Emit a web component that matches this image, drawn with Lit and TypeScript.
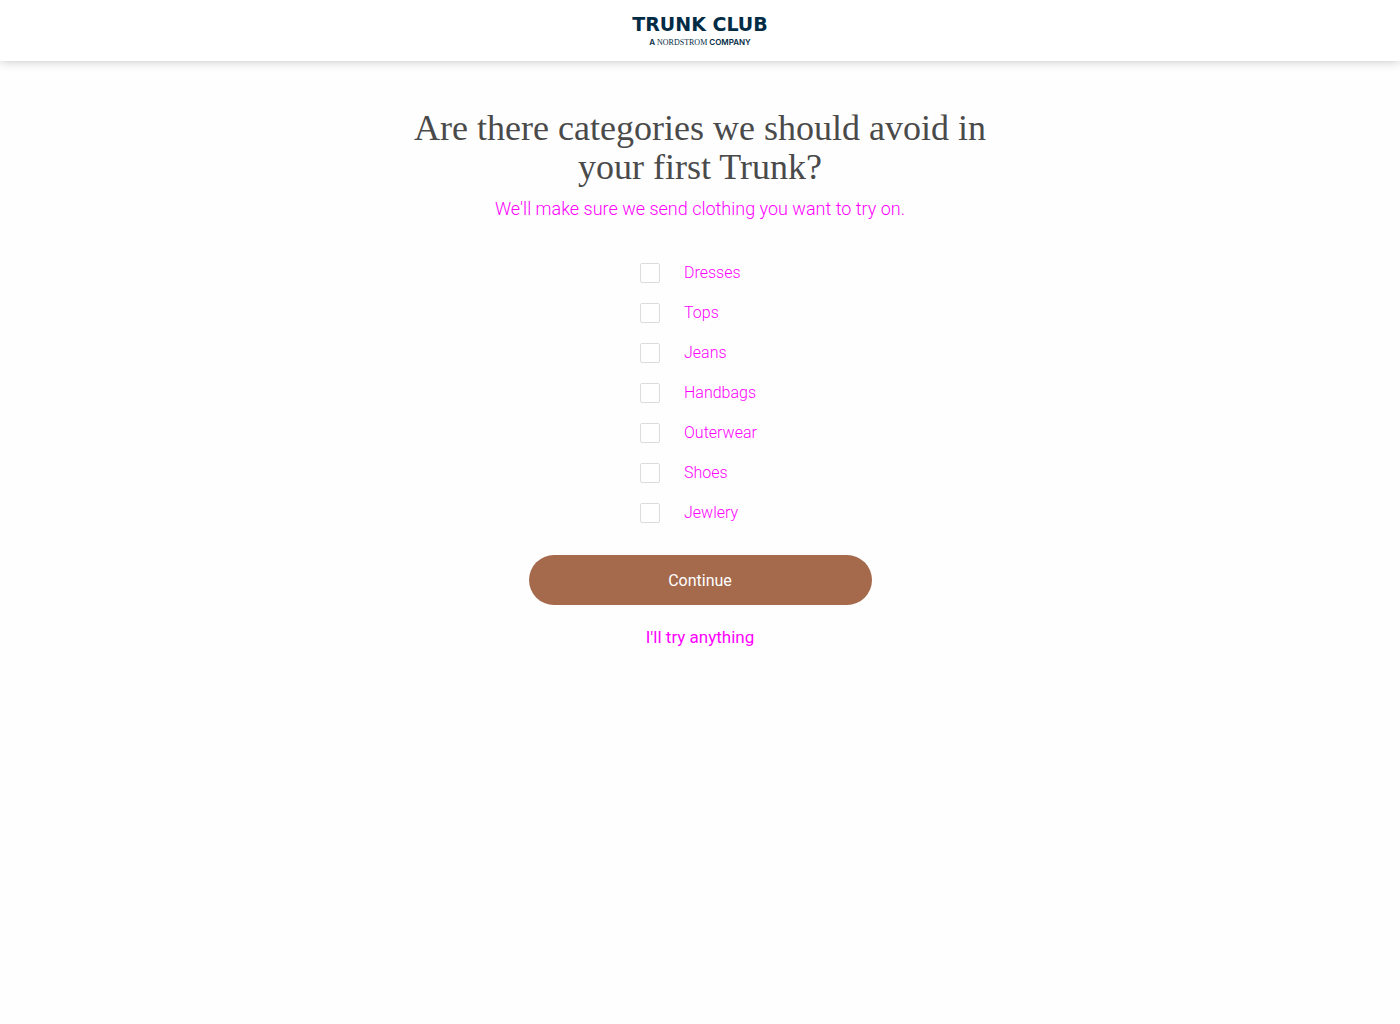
import { LitElement, html, css } from "lit";
import { customElement, state } from "lit/decorators.js";

@customElement("brand-header")
class BrandHeader extends LitElement {
  static styles = css`
    :host {
      display: block;
    }
    .bar {
      display: flex;
      justify-content: center;
      padding: 12px 16px;
      background: #fff;
      box-shadow: 0 0 10px rgba(0, 0, 0, 0.24);
    }
    .logo {
      display: flex;
      flex-direction: column;
      align-items: center;
      color: #022b45;
      text-decoration: none;
      white-space: nowrap;
    }
    .name {
      font-family: "DejaVu Sans", sans-serif;
      font-size: 19px;
      font-weight: 700;
      line-height: 24px;
    }
    .owner {
      font-family: Inter, sans-serif;
      font-size: 8px;
      font-weight: 600;
      line-height: 13px;
    }
    .partner {
      font-family: "Liberation Serif", serif;
      font-weight: 400;
    }
  `;

  render() {
    return html`
      <header class="bar">
        <a class="logo" href="#">
          <span class="name">TRUNK CLUB</span>
          <span class="owner">A <span class="partner">NORDSTROM</span> COMPANY</span>
        </a>
      </header>
    `;
  }
}

@customElement("app-root")
class AppRoot extends LitElement {
  static styles = css`
    :host {
      display: block;
      min-height: 100vh;
      background: #fefefe;
      color: #f0f;
      font-family: Roboto, sans-serif;
    }
    .page {
      display: flex;
      flex-direction: column;
      align-items: center;
      padding: 48px 16px;
    }
    .title {
      max-width: 600px;
      margin: 0;
      color: #4a4a4a;
      font-family: "Liberation Serif", serif;
      font-size: 36px;
      font-weight: 400;
      line-height: 39px;
      text-align: center;
    }
    .subtitle {
      margin: 8px 0 0;
      font-size: 18px;
      font-weight: 300;
      line-height: 28px;
      text-align: center;
    }
    .form {
      display: flex;
      flex-direction: column;
      align-items: center;
      width: 100%;
      max-width: 343px;
      margin-top: 40px;
    }
    .options {
      display: flex;
      flex-direction: column;
      gap: 20px;
      min-width: 120px;
      margin: 0;
      padding: 0;
      border: 0;
    }
    .option {
      display: flex;
      align-items: center;
      gap: 24px;
      font-size: 16px;
      font-weight: 300;
      line-height: 20px;
      cursor: pointer;
    }
    .box {
      appearance: none;
      box-sizing: border-box;
      width: 20px;
      height: 20px;
      margin: 0;
      border: 1px solid #dcdcdc;
      border-radius: 2px;
      background: #fff;
      cursor: pointer;
    }
    .box:checked {
      border-color: #a5694c;
      background: #a5694c;
    }
    .continue {
      width: 100%;
      height: 50px;
      margin: 32px 0 0;
      padding: 0;
      border: 0;
      border-radius: 25px;
      background: #a5694c;
      color: #fff;
      font-family: inherit;
      font-size: 16px;
      font-weight: 400;
      cursor: pointer;
    }
    .skip {
      margin-top: 22px;
      color: inherit;
      font-size: 17px;
      font-weight: 400;
      line-height: 20px;
      text-decoration: none;
    }
  `;

  @state() private avoided = new Set<string>();

  private categories = ["Dresses", "Tops", "Jeans", "Handbags", "Outerwear", "Shoes", "Jewlery"];

  private toggle(name: string) {
    const next = new Set(this.avoided);
    if (!next.delete(name)) next.add(name);
    this.avoided = next;
  }

  render() {
    return html`
      <brand-header></brand-header>
      <main class="page">
        <h1 class="title" id="title">Are there categories we should avoid in your first Trunk?</h1>
        <p class="subtitle">We'll make sure we send clothing you want to try on.</p>
        <form class="form" @submit=${(e: Event) => e.preventDefault()}>
          <fieldset class="options" aria-labelledby="title">
            ${this.categories.map(
              (name) => html`
                <label class="option">
                  <input
                    class="box"
                    type="checkbox"
                    .checked=${this.avoided.has(name)}
                    @change=${() => this.toggle(name)}
                  />
                  <span>${name}</span>
                </label>
              `
            )}
          </fieldset>
          <button class="continue" type="submit">Continue</button>
          <a class="skip" href="#">I'll try anything</a>
        </form>
      </main>
    `;
  }
}
